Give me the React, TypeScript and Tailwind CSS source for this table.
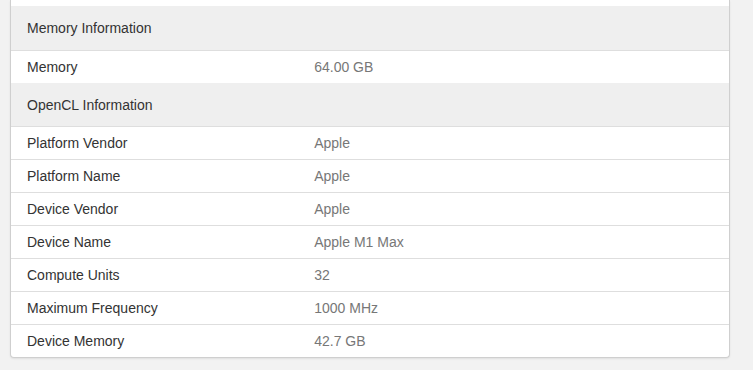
import React from "react";

const rowsCl = [
  { label: "Platform Vendor", value: "Apple" },
  { label: "Platform Name", value: "Apple" },
  { label: "Device Vendor", value: "Apple" },
  { label: "Device Name", value: "Apple M1 Max" },
  { label: "Compute Units", value: "32" },
  { label: "Maximum Frequency", value: "1000 MHz" },
  { label: "Device Memory", value: "42.7 GB" },
];

function Row({ label, value, last }: { label: string; value: string; last: boolean }) {
  return (
    <div className={`flex items-center text-[14px] ${last ? "h-[32px]" : "h-[33px] border-b border-[#dedede]"}`}>
      <div className="w-[40%] pl-4 text-[#333333]">{label}</div>
      <div className="flex-1 pl-4 text-[#777777]">{value}</div>
    </div>
  );
}

export default function App() {
  return (
    <div
      className="h-[370px] w-[753px] bg-[#f2f2f2] overflow-hidden"
      style={{ fontFamily: '"Liberation Sans", Arial, sans-serif' }}
    >
      <div className="ml-[10px] w-[720px] rounded-b-[4px] border-x border-b border-[#cfcfcf] bg-white shadow-[0_1px_2px_rgba(0,0,0,0.08)]">
        <div className="h-[6px] bg-white" />
        <div className="flex h-[45px] items-center border-b border-[#dedede] bg-[#efefef] pl-4 text-[14px] text-[#333333]">
          Memory Information
        </div>
        <div className="flex h-[32px] items-center text-[14px]">
          <div className="w-[40%] pl-4 text-[#333333]">Memory</div>
          <div className="flex-1 pl-4 text-[#777777]">64.00 GB</div>
        </div>
        <div className="flex h-[44px] items-center border-b border-[#dedede] bg-[#efefef] pl-4 pt-px text-[14px] text-[#333333]">
          OpenCL Information
        </div>
        {rowsCl.map((r, i) => (
          <Row key={r.label} label={r.label} value={r.value} last={i === rowsCl.length - 1} />
        ))}
      </div>
    </div>
  );
}
